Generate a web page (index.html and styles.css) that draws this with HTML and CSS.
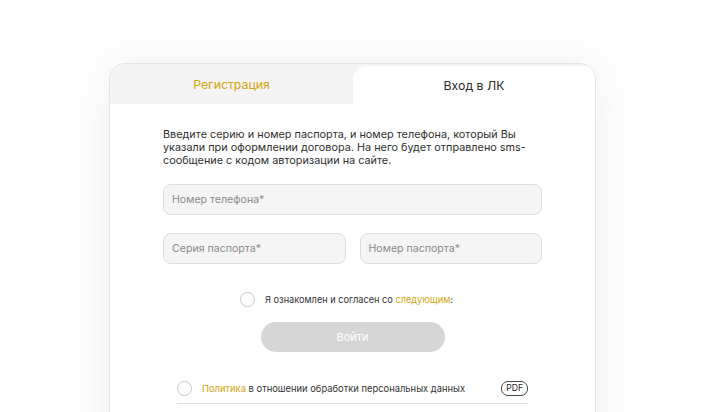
FILE: index.html
```html
<!DOCTYPE html>
<html lang="ru">
<head>
<meta charset="utf-8">
<link rel="stylesheet" href="styles.css">
</head>
<body>
<div class="page">
  <div class="card">
    <div class="tabs">
      <div class="tab tab-inactive">Регистрация</div>
      <div class="tab tab-active">Вход в ЛК</div>
    </div>
    <div class="content">
      <p class="desc">Введите серию и номер паспорта, и номер телефона, который Вы указали при оформлении договора. На него будет отправлено sms-сообщение с кодом авторизации на сайте.</p>
      <div class="field">Номер телефона*</div>
      <div class="row">
        <div class="field">Серия паспорта*</div>
        <div class="field">Номер паспорта*</div>
      </div>
      <div class="agree">
        <span class="circle"></span>
        <span class="agree-text">Я ознакомлен и согласен со <span class="link">следующим</span>:</span>
      </div>
      <div class="btn-wrap"><div class="btn">Войти</div></div>
      <div class="doc">
        <span class="circle"></span>
        <span class="doc-text"><span class="link">Политика</span> в отношении обработки персональных данных</span>
        <span class="pdf">PDF</span>
      </div>
    </div>
  </div>
</div>
</body>
</html>
```
FILE: styles.css
```css
html, body {
  margin: 0;
  padding: 0;
  background: #fff;
  font-family: Inter, "Noto Sans", sans-serif;
  color: #2b2b2b;
  overflow: hidden;
  height: 412px;
}
.page {
  padding-top: 63px;
  padding-left: 109px;
}
.card {
  width: 485px;
  height: 420px;
  border: 1px solid #e4e4e7;
  border-radius: 16px;
  background: #fff;
  box-shadow: 0 0 50px rgba(30, 30, 60, 0.07);
  overflow: hidden;
}
.tabs {
  display: grid;
  grid-template-columns: 243px 242px;
  background: #f4f4f4;
  height: 40px;
}
.tab {
  display: flex;
  align-items: center;
  justify-content: center;
  font-size: 12.3px;
}
.tab-inactive {
  color: #d4a40c;
}
.tab-active {
  background: #fff;
  margin-top: 2px;
  border-top-left-radius: 14px;
  color: #2b2b2b;
}
.content {
  padding: 24px 53px 0 53px;
}
.desc {
  margin: 0 0 17px 0;
  font-size: 10.85px;
  line-height: 13px;
  color: #2f2f2f;
}
.field {
  height: 29px;
  border: 1px solid #dcdcdc;
  border-radius: 8px;
  background: #f5f5f5;
  display: flex;
  align-items: center;
  padding-left: 8px;
  font-size: 10.6px;
  color: #8a8a8a;
}
.row {
  margin-top: 18px;
  display: grid;
  grid-template-columns: 1fr 1fr;
  gap: 14px;
}
.agree {
  margin-top: 28px;
  display: flex;
  align-items: center;
  justify-content: center;
  gap: 10px;
  font-size: 9.2px;
  color: #333;
  padding-right: 12px;
}
.circle {
  width: 13px;
  height: 13px;
  border: 1px solid #c8c8c8;
  border-radius: 50%;
  background: #fff;
  flex: none;
}
.link {
  color: #d4a40c;
}
.btn-wrap {
  margin-top: 15px;
  display: flex;
  justify-content: center;
}
.btn {
  width: 184px;
  height: 30px;
  border-radius: 15px;
  background: #d6d6d6;
  color: #fff;
  font-size: 11px;
  display: flex;
  align-items: center;
  justify-content: center;
}
.doc {
  margin: 29px 14px 0 14px;
  display: flex;
  align-items: center;
  gap: 10px;
  padding-bottom: 7px;
  border-bottom: 1px solid #e2e2e2;
  font-size: 9.4px;
  color: #333;
}
.doc-text {
  flex: 1;
}
.pdf {
  border: 1px solid #444;
  border-radius: 7px;
  padding: 1px 4px;
  font-size: 8.6px;
  line-height: 11px;
  color: #222;
}
```
